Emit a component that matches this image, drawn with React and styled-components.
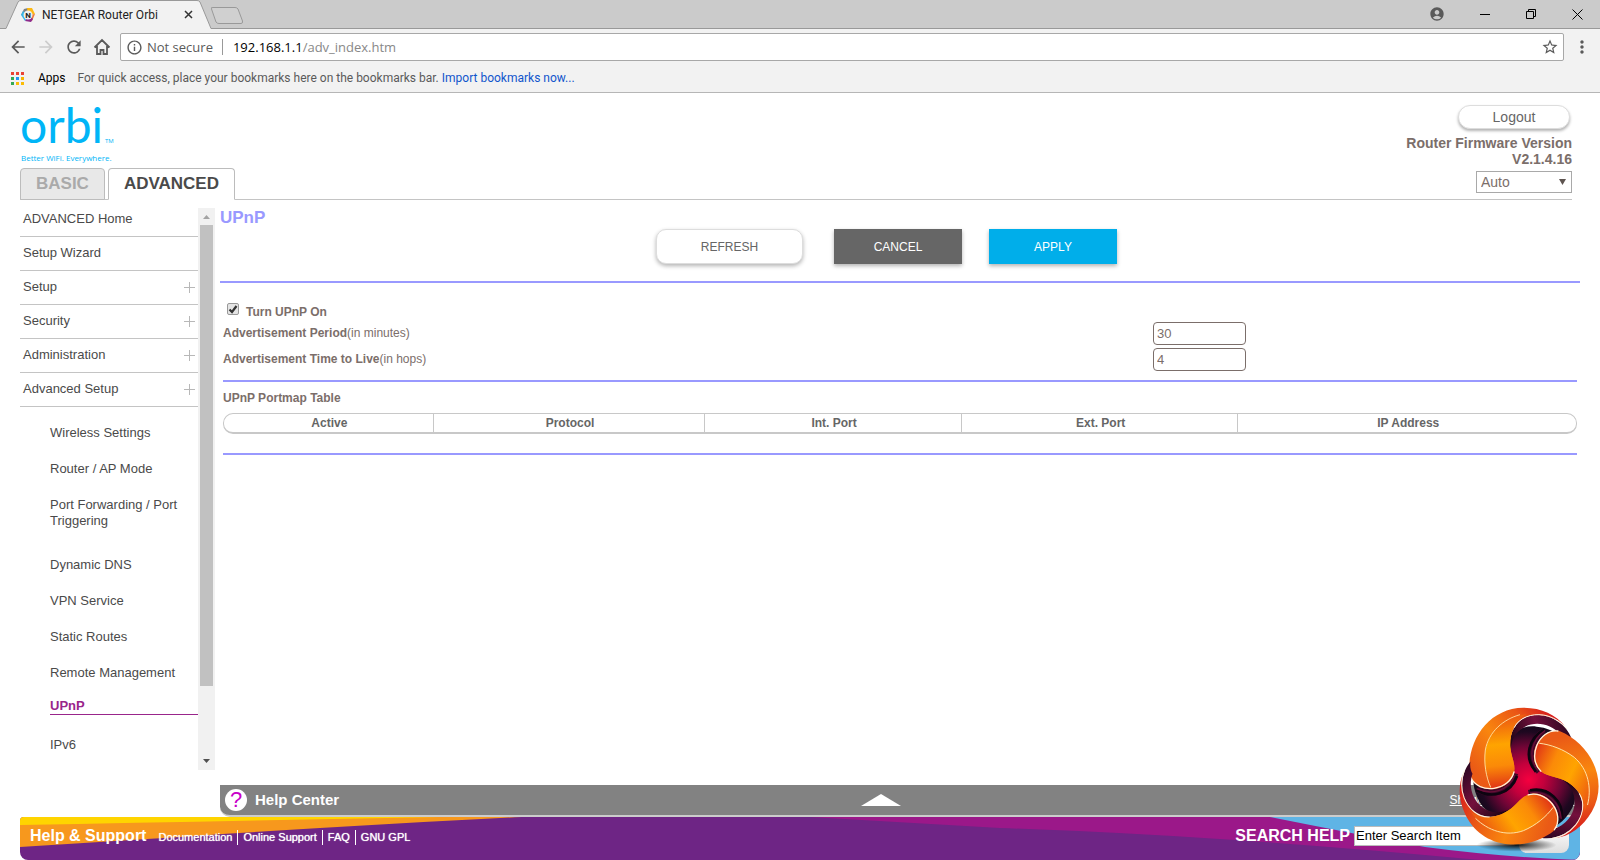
import { useState } from 'react';
import styled, { createGlobalStyle, css } from 'styled-components';
import {
    MdAccountCircle,
    MdArrowBack,
    MdArrowForward,
    MdInfoOutline,
    MdMoreVert,
    MdRefresh,
    MdStarBorder,
} from 'react-icons/md';

const GlobalStyle = createGlobalStyle`
  *, *::before, *::after { box-sizing: border-box; }
  body {
    margin: 0;
    background: #fff;
    color: #444;
    font: 13px/16px Arial, "Liberation Sans", sans-serif;
  }
  button, input, select { font-family: inherit; }
`;

const Window = styled.div`
  display: flex;
  flex-direction: column;
  min-height: 100vh;
`;

/* ---------- browser ---------- */

const BrowserBar = styled.header`
  background: #f2f2f2;
  border-bottom: 1px solid #b6b6b6;
  color: #5a5a5a;
  font-family: "Open Sans", "Noto Sans", sans-serif;
`;

const TabStrip = styled.div`
  display: flex;
  height: 29px;
  background: #cbcbcb;
  border-bottom: 1px solid #999;
`;

const BrowserTab = styled.div`
  position: relative;
  display: flex;
  align-items: center;
  width: 211px;
  height: 29px;
  padding: 0 18px 0 20px;
  gap: 6px;
  color: #222;
  font-family: Roboto, sans-serif;
  font-size: 12px;
`;

const TabShape = styled.svg`
  position: absolute;
  inset: 0;
`;

const TabTitle = styled.span`
  position: relative;
  flex: 1;
  white-space: nowrap;
`;

const Favicon = styled.svg`
  position: relative;
`;

const PlainButton = styled.button`
  position: relative;
  display: flex;
  align-items: center;
  justify-content: center;
  padding: 0;
  border: 0;
  background: none;
  color: ${(p) => p.$color || '#5a5a5a'};
`;

const WindowButtons = styled.div`
  display: flex;
  align-items: center;
  gap: 35px;
  margin-left: auto;
  padding-right: 17px;
`;

const Toolbar = styled.div`
  display: flex;
  align-items: center;
  height: 36px;
  padding: 0 8px;
  gap: 8px;
`;

const Address = styled.div`
  display: flex;
  align-items: center;
  flex: 1;
  height: 28px;
  padding: 0 4px 0 5px;
  border: 1px solid #a8a8a8;
  border-radius: 2px;
  background: #fff;
  font-size: 13px;
`;

const Security = styled.span`
  margin-left: 4px;
  padding-right: 9px;
  border-right: 1px solid #999;
`;

const Url = styled.span`
  flex: 1;
  padding-left: 10px;
  color: #888;

  b { color: #000; font-weight: 400; }
`;

const Bookmarks = styled.div`
  display: flex;
  align-items: center;
  height: 27px;
  padding: 0 0 1px 11px;
  font-family: Roboto, sans-serif;
  font-size: 12px;

  a { margin-left: 3px; color: #1155cc; text-decoration: none; }
`;

const AppsLabel = styled.span`
  margin: 0 12px 0 14px;
  color: #000;
`;

/* ---------- page header ---------- */

const PageHeader = styled.div`
  display: flex;
  justify-content: space-between;
  margin: 0 28px 0 20px;
  height: 107px;
  border-bottom: 1px solid #c4c4c4;
`;

const Brand = styled.div`
  display: flex;
  flex-direction: column;
  justify-content: space-between;
  padding-top: 8px;
`;

const Logo = styled.svg`
  overflow: visible;
`;

const Tabs = styled.nav`
  display: flex;
  gap: 3px;
  margin-bottom: -1px;
`;

const PageTab = styled.a`
  height: 32px;
  padding: 0 15px;
  border: 1px solid #bcbcbc;
  border-radius: 4px 4px 0 0;
  background: #e8e8e8;
  color: #aaa;
  font-size: 17px;
  font-weight: 700;
  line-height: 30px;
  text-decoration: none;

  ${(p) => p.$active && css`
    border-bottom-color: #fff;
    background: #fff;
    color: #4a4a4a;
  `}
`;

const Account = styled.div`
  display: flex;
  flex-direction: column;
  align-items: flex-end;
  padding-top: 12px;
  color: #7b6e6a;
`;

const LogoutButton = styled.button`
  width: 112px;
  height: 24px;
  margin: 0 2px 6px 0;
  border: 1px solid #ddd;
  border-radius: 12px;
  background: #fff;
  box-shadow: 0 2px 3px rgba(0, 0, 0, 0.3);
  color: #666;
  font-size: 14px;
`;

const Firmware = styled.div`
  font-size: 14px;
  font-weight: 700;
  text-align: right;
`;

const Language = styled.div`
  position: relative;
  width: 96px;
  margin-top: 4px;

  svg { position: absolute; top: 8px; right: 6px; pointer-events: none; }
`;

const LanguageSelect = styled.select`
  width: 100%;
  height: 22px;
  padding: 0 4px;
  border: 1px solid #a9a9a9;
  border-radius: 0;
  background: #fff;
  color: #7b6e6a;
  font-size: 14px;
  appearance: none;
`;

/* ---------- side menu ---------- */

const Body = styled.div`
  display: flex;
  flex: 1;
  gap: 5px;
  padding: 0 20px;
`;

const Sidebar = styled.aside`
  display: flex;
  width: 195px;
  margin: 8px 0 47px;
`;

const Menu = styled.nav`
  flex: 1;
`;

const MenuItem = styled.a`
  display: flex;
  align-items: center;
  justify-content: space-between;
  padding: 8px 3px 9px;
  border-bottom: 1px solid #c4c4c4;
  color: #4a4a4a;
  text-decoration: none;

  &:first-child { padding-top: 3px; }
`;

const SubMenu = styled.div`
  padding: 8px 0 0 30px;
`;

const SubItem = styled.a`
  display: block;
  padding: 10px 0;
  color: #4a4a4a;
  text-decoration: none;

  ${(p) => p.$tall && css`
    margin-bottom: 8px;
  `}

  ${(p) => p.$active && css`
    margin-bottom: 12px;
    padding: 7px 0 0;
    border-bottom: 1px solid #99258b;
    color: #99258b;
    font-weight: 700;
  `}
`;

const ScrollTrack = styled.div`
  display: flex;
  flex-direction: column;
  align-items: center;
  width: 17px;
  background: #f1f1f1;
`;

const ScrollArrow = styled.svg`
  flex: none;
  margin: 5px 0;
`;

const ScrollThumb = styled.div`
  flex: none;
  width: 13px;
  height: 82%;
  margin-bottom: auto;
  background: #c1c1c1;
`;

/* ---------- main panel ---------- */

const Main = styled.main`
  display: flex;
  flex: 1;
  flex-direction: column;
  color: #7b6e6a;
  font-size: 12px;
`;

const Title = styled.h1`
  margin: 8px 0 1px;
  color: #9999ff;
  font-size: 17px;
  line-height: 20px;
`;

const Actions = styled.div`
  display: flex;
  justify-content: center;
  gap: 27px;
  padding: 0 27px 17px 0;
  border-bottom: 2px solid #9999ff;
`;

const ActionButton = styled.button`
  width: 128px;
  height: 35px;
  border: 0;
  background: ${(p) => (p.$primary ? '#00aeea' : '#666')};
  box-shadow: 0 2px 4px rgba(0, 0, 0, 0.3);
  color: #fff;
  font-size: 12px;

  ${(p) => p.$outline && css`
    width: 147px;
    margin-right: 4px;
    border: 1px solid #ddd;
    border-radius: 10px;
    background: #fff;
    color: #666;
  `}
`;

const Form = styled.form`
  padding: 16px 3px 0;
`;

const CheckRow = styled.div`
  display: flex;
  gap: 7px;
  padding: 4px 0 1px 4px;
  font-weight: 700;

  label { line-height: 18px; }
`;

const Checkbox = styled.input`
  width: 12px;
  height: 12px;
  margin: 0;
  border: 1px solid #999;
  border-radius: 2px;
  background: linear-gradient(#eee, #ddd);
  appearance: none;

  &:checked {
    background: url("data:image/svg+xml,%3Csvg xmlns='http://www.w3.org/2000/svg' viewBox='0 0 10 10'%3E%3Cpath d='M1.5 5.5 4 8 8.5 2' fill='none' stroke='%23333' stroke-width='2.2'/%3E%3C/svg%3E") #e4e4e4;
  }
`;

const Field = styled.div`
  display: grid;
  grid-template-columns: 930fr 424fr;
  height: 26px;

  label { line-height: 22px; }
`;

const NumberInput = styled.input`
  width: 93px;
  height: 23px;
  padding: 0 3px;
  border: 1px solid #7b6e6a;
  border-radius: 4px;
  color: #7b6e6a;
  font-size: 13px;
`;

const Rule = styled.hr`
  height: 2px;
  margin: ${(p) => p.$gap}px 0 0;
  border: 0;
  background: #9999ff;
`;

const TableTitle = styled.h2`
  margin: 8px 0 7px;
  font-size: 12px;
  line-height: 16px;
`;

const PortTable = styled.table`
  width: 100%;
  border: 1px solid #c8c8c8;
  border-bottom-width: 2px;
  border-radius: 10px;
  border-spacing: 0;
  table-layout: fixed;

  th {
    height: 18px;
    padding: 0 0 0 2px;
    border-left: 1px solid #c8c8c8;
    color: #666;
    line-height: 16px;
  }
  th:first-child { border-left: 0; }
`;

const HelpBar = styled.div`
  display: grid;
  grid-template-columns: 635fr auto 672fr;
  align-items: center;
  height: 32px;
  margin-top: auto;
  padding: 0 5px;
  border-bottom: 2px solid #ccc;
  border-radius: 0 0 0 10px;
  background: #828282;
  color: #fff;

  a { justify-self: end; color: #fff; }
`;

const HelpTitle = styled.strong`
  display: flex;
  align-items: center;
  gap: 8px;
  font-size: 15px;
`;

const HelpMark = styled.span`
  width: 22px;
  height: 22px;
  border-radius: 50%;
  background: #fff;
  color: #c800c8;
  font-size: 22px;
  font-weight: 400;
  line-height: 22px;
  text-align: center;
`;

/* ---------- footer ---------- */

const Footer = styled.footer`
  position: relative;
  display: flex;
  align-items: center;
  height: 43px;
  margin: 0 20px;
  padding: 0 11px 6px 10px;
  overflow: hidden;
  border-radius: 4px 4px 8px 8px;
  background: #6e2585;
  color: #fff;
`;

const FooterArt = styled.svg`
  position: absolute;
  inset: 0;
  width: 100%;
  height: 100%;
`;

const FooterHeading = styled.strong`
  position: relative;
  font-size: 16px;
`;

const FooterLinks = styled.div`
  position: relative;
  display: flex;
  flex: 1;
  padding: 4px 0 0 7px;

  a {
    padding: 0 5px;
    color: #fff;
    font-size: 11px;
    line-height: 15px;
    text-decoration: none;
    text-shadow: 0 0 1px #fff;
  }
  a + a { border-left: 1px solid #fff; }
`;

const Search = styled.form`
  position: relative;
  display: flex;
  align-items: center;
  gap: 4px;
  font-size: 16px;
  font-weight: 700;
`;

const SearchInput = styled.input`
  width: 161px;
  height: 20px;
  padding: 0 1px;
  border: 1px solid #bbb;
  color: #000;
  font-size: 13px;

  &::placeholder { color: #000; opacity: 1; }
`;

const SearchButton = styled.button`
  width: 50px;
  height: 26px;
  margin-top: 8px;
  border: 0;
  border-radius: 8px;
  background: linear-gradient(#fff, #ddd);
`;

/* floats over the corner of the page */
const Watermark = styled.svg`
  position: absolute;
  top: 707px;
  right: 0;
`;

const MENU = [
    { label: 'ADVANCED Home' },
    { label: 'Setup Wizard' },
    { label: 'Setup', expandable: true },
    { label: 'Security', expandable: true },
    { label: 'Administration', expandable: true },
    { label: 'Advanced Setup', expandable: true },
];

const SUBMENU = [
    'Wireless Settings',
    'Router / AP Mode',
    'Port Forwarding / Port Triggering',
    'Dynamic DNS',
    'VPN Service',
    'Static Routes',
    'Remote Management',
    'UPnP',
    'IPv6',
];

const COLUMNS = [
    ['Active', 209],
    ['Protocol', 272],
    ['Int. Port', 257],
    ['Ext. Port', 277],
    ['IP Address', 339],
];

const APP_DOTS = ['#ea4335', '#ea4335', '#ea4335', '#34a853', '#2196f3', '#f4b400', '#34a853', '#fbbc05', '#fbbc05'];

const Plus = () => (
    <svg width="11" height="11" viewBox="0 0 11 11">
        <path d="M5.500 0v11M0 5.500h11" stroke="#b8b8b8" />
    </svg>
);

const HomeIcon = () => (
    <svg width="20" height="20" viewBox="0 0 20 20">
        <path d="M2.500 10.500L10 3l7.500 7.500M5 9v8h3.500v-4h3v4H15V9" fill="none" stroke="#5a5a5a" strokeWidth="1.800" />
    </svg>
);

const NetgearIcon = () => (
    <Favicon width="16" height="16" viewBox="0 0 16 16">
        <path d="M4 2l4-1v7H1z" fill="#7d8083" />
        <path d="M7 1h5l3 6-7 1z" fill="#fdb913" />
        <path d="M15 7l-3 7-4-6z" fill="#ee7a3a" />
        <path d="M13 12l-2 3-6-1 3-6z" fill="#8e2a8b" />
        <path d="M5 14L1 8l2-4 5 4z" fill="#35b5e8" />
        <circle cx="8" cy="8" r="4.500" fill="#eee" />
        <text x="8" y="11" textAnchor="middle" fontSize="8" fontWeight="700" fill="#222">N</text>
    </Favicon>
);

const OrbiLogo = () => (
    <Logo width="96" height="60" viewBox="0 0 96 60" fill="#00b5f7">
        <text x="0" y="42" fontFamily="Lato, sans-serif" fontSize="48">orbi</text>
        <text x="85" y="42" fontFamily="Open Sans, sans-serif" fontSize="6">TM</text>
        <text x="1" y="60" fontFamily="Open Sans, sans-serif" fontSize="8">Better WiFi. Everywhere.</text>
    </Logo>
);

const Swirl = () => (
    <Watermark width="142" height="145" viewBox="234 51 426 435" aria-hidden="true">
        <defs>
            <radialGradient id="core" gradientUnits="userSpaceOnUse" cx="440" cy="270" r="170">
                <stop offset="0" stopColor="#f5003f" />
                <stop offset="0.3" stopColor="#c2003c" />
                <stop offset="0.6" stopColor="#6d0535" />
                <stop offset="0.85" stopColor="#1e0820" />
                <stop offset="1" stopColor="#120718" />
            </radialGradient>
            <linearGradient id="blade" gradientUnits="userSpaceOnUse" x1="290" y1="250" x2="500" y2="60">
                <stop offset="0" stopColor="#ea5a16" />
                <stop offset="0.4" stopColor="#f9860e" />
                <stop offset="0.75" stopColor="#ea5616" />
                <stop offset="1" stopColor="#d81e1c" />
            </linearGradient>
            <linearGradient id="face" gradientUnits="userSpaceOnUse" x1="350" y1="90" x2="370" y2="300">
                <stop offset="0" stopColor="#ee5f10" />
                <stop offset="0.35" stopColor="#ffa400" />
                <stop offset="0.65" stopColor="#fb8a08" />
                <stop offset="1" stopColor="#dd2a18" />
            </linearGradient>
            <linearGradient id="ribbon" gradientUnits="userSpaceOnUse" x1="390" y1="170" x2="570" y2="110">
                <stop offset="0" stopColor="#1a0514" />
                <stop offset="0.5" stopColor="#74103c" />
                <stop offset="1" stopColor="#2a0620" />
            </linearGradient>
            <radialGradient id="shade">
                <stop offset="0" stopColor="#000" stopOpacity="0.9" />
                <stop offset="1" stopColor="#000" stopOpacity="0" />
            </radialGradient>
        </defs>
        <ellipse cx="410" cy="465" rx="120" ry="20" fill="url(#shade)" />
        {[0, 120, 240].map((turn) => (
            <path
                key={turn}
                transform={`rotate(${turn} 443 268)`}
                fill="url(#core)"
                d="M403 245C400 210 380 180 394 145C405 115 440 106 470 110C500 113 520 122 534 134C495 135 462 165 466 208C469 238 495 258 525 275L440 320Z"
            />
        ))}
        {[0, 120, 240].map((turn) => (
            <g key={turn} transform={`rotate(${turn} 443 268)`}>
                <path fill="url(#ribbon)" d="M391 190C380 120 420 74 470 74C520 76 560 105 575 146C563 136 550 133 540 133C515 103 470 92 435 110C405 126 392 150 391 190Z" />
                <path fill="none" stroke="#3c0828" strokeWidth="18" d="M292 298C335 320 388 308 406 250" />
                <path fill="none" stroke="#0d0410" strokeWidth="8" d="M289 300C332 326 392 314 411 258" />
                <path fill="none" stroke="#6a0e38" strokeWidth="4" d="M290 296C332 316 384 305 405 254" />
                <path fill="url(#blade)" d="M270 258C256 160 322 54 430 53C484 53 528 74 554 108C524 78 480 70 448 77C405 88 388 130 391 172C394 205 410 225 400 255C389 285 355 301 325 297C300 294 280 284 270 258Z" />
                <path fill="url(#face)" d="M442 72C400 76 350 100 326 150C306 195 312 250 334 294C360 298 389 285 400 255C410 225 394 205 391 172C388 130 405 88 442 72Z" />
                <path fill="none" stroke="#ffe9b0" strokeWidth="2.500" d="M420 74C370 88 326 125 316 180C311 220 318 260 332 292" />
                <path fill="none" stroke="#fff3dc" strokeWidth="4" strokeLinecap="round" d="M272 262C284 288 312 299 342 295C375 290 396 270 402 246" />
                <path fill="none" stroke="#fff3dc" strokeWidth="3" strokeLinecap="round" d="M403 112C418 82 455 70 490 75C520 80 545 97 560 116" />
            </g>
        ))}
    </Watermark>
);

const App = () => {
    const [enabled, setEnabled] = useState(true);
    const [period, setPeriod] = useState('30');
    const [hops, setHops] = useState('4');

    const handleChange = (func) => (event) => {
        func(event.target.value);
    };

    return (
        <Window>
            <GlobalStyle />
            <BrowserBar>
                <TabStrip>
                    <BrowserTab>
                        <TabShape width="250" height="29" viewBox="0 0 250 29">
                            <path d="M0 28.5H6L18 2Q19 .5 21 .5H197Q199 .5 200 2L211 28.5V29H0Z" fill="#f2f2f2" />
                            <path d="M0 28.5H6L18 2Q19 .5 21 .5H197Q199 .5 200 2L211 28.5" fill="none" stroke="#999" />
                        </TabShape>
                        <NetgearIcon />
                        <TabTitle>NETGEAR Router Orbi</TabTitle>
                        <PlainButton aria-label="Close tab">
                            <svg width="9" height="9"><path d="M1 1l7 7M8 1L1 8" stroke="#333" strokeWidth="1.5" /></svg>
                        </PlainButton>
                    </BrowserTab>
                    <PlainButton aria-label="New tab">
                        <svg width="34" height="28">
                            <path d="M.5 9Q-1 7.500 2 7.500H24Q26 7.500 27 9L31.500 21Q32 23.500 30 23.500H8Q6 23.500 5 22Z" fill="#d0d0d0" stroke="#999" />
                        </svg>
                    </PlainButton>
                    <WindowButtons>
                        <PlainButton aria-label="Profile"><MdAccountCircle size={16} /></PlainButton>
                        <PlainButton aria-label="Minimize">
                            <svg width="11" height="11"><path d="M0 5.500h10" stroke="#000" /></svg>
                        </PlainButton>
                        <PlainButton aria-label="Restore">
                            <svg width="11" height="11"><path d="M.5 2.500h7v7h-7zM2.500 2.500v-2h7v7h-2" fill="none" stroke="#000" /></svg>
                        </PlainButton>
                        <PlainButton aria-label="Close">
                            <svg width="11" height="11"><path d="M.5.5l10 10M10.500.5l-10 10" stroke="#000" /></svg>
                        </PlainButton>
                    </WindowButtons>
                </TabStrip>
                <Toolbar>
                    <PlainButton aria-label="Back"><MdArrowBack size={20} /></PlainButton>
                    <PlainButton aria-label="Forward" $color="#ccc"><MdArrowForward size={20} /></PlainButton>
                    <PlainButton aria-label="Reload"><MdRefresh size={20} /></PlainButton>
                    <PlainButton aria-label="Home"><HomeIcon /></PlainButton>
                    <Address>
                        <MdInfoOutline size={17} />
                        <Security>Not secure</Security>
                        <Url><b>192.168.1.1</b>/adv_index.htm</Url>
                        <MdStarBorder size={18} />
                    </Address>
                    <PlainButton aria-label="Menu"><MdMoreVert size={20} /></PlainButton>
                </Toolbar>
                <Bookmarks>
                    <svg width="13" height="13">
                        {APP_DOTS.map((fill, i) => (
                            <rect key={i} x={(i % 3) * 5} y={Math.floor(i / 3) * 5} width="3" height="3" fill={fill} />
                        ))}
                    </svg>
                    <AppsLabel>Apps</AppsLabel>
                    For quick access, place your bookmarks here on the bookmarks bar.
                    <a href="#import">Import bookmarks now...</a>
                </Bookmarks>
            </BrowserBar>

            <PageHeader>
                <Brand>
                    <OrbiLogo />
                    <Tabs>
                        <PageTab href="#basic">BASIC</PageTab>
                        <PageTab href="#advanced" $active>ADVANCED</PageTab>
                    </Tabs>
                </Brand>
                <Account>
                    <LogoutButton>Logout</LogoutButton>
                    <Firmware>Router Firmware Version<br />V2.1.4.16</Firmware>
                    <Language>
                        <LanguageSelect aria-label="Language" defaultValue="Auto">
                            <option>Auto</option>
                        </LanguageSelect>
                        <svg width="7" height="6"><path d="M0 0h7L3.500 6z" fill="#5e5450" /></svg>
                    </Language>
                </Account>
            </PageHeader>

            <Body>
                <Sidebar>
                    <Menu>
                        {MENU.map(({ label, expandable }) => (
                            <MenuItem key={label} href="#menu">
                                {label}
                                {expandable && <Plus />}
                            </MenuItem>
                        ))}
                        <SubMenu>
                            {SUBMENU.map((label) => (
                                <SubItem key={label} href="#page" $active={label === 'UPnP'} $tall={label.length > 20}>
                                    {label}
                                </SubItem>
                            ))}
                        </SubMenu>
                    </Menu>
                    <ScrollTrack>
                        <ScrollArrow width="7" height="7"><path d="M0 6l3.500-4L7 6z" fill="#a3a3a3" /></ScrollArrow>
                        <ScrollThumb />
                        <ScrollArrow width="7" height="7"><path d="M0 1l3.500 4L7 1z" fill="#505050" /></ScrollArrow>
                    </ScrollTrack>
                </Sidebar>

                <Main>
                    <Title>UPnP</Title>
                    <Actions>
                        <ActionButton $outline>REFRESH</ActionButton>
                        <ActionButton>CANCEL</ActionButton>
                        <ActionButton $primary>APPLY</ActionButton>
                    </Actions>
                    <Form>
                        <CheckRow>
                            <Checkbox
                                id="upnp"
                                type="checkbox"
                                checked={enabled}
                                onChange={(e) => setEnabled(e.target.checked)}
                            />
                            <label htmlFor="upnp">Turn UPnP On</label>
                        </CheckRow>
                        <Field>
                            <label htmlFor="period"><b>Advertisement Period</b>(in minutes)</label>
                            <NumberInput id="period" value={period} onChange={handleChange(setPeriod)} />
                        </Field>
                        <Field>
                            <label htmlFor="hops"><b>Advertisement Time to Live</b>(in hops)</label>
                            <NumberInput id="hops" value={hops} onChange={handleChange(setHops)} />
                        </Field>
                        <Rule $gap={6} />
                        <TableTitle>UPnP Portmap Table</TableTitle>
                        <PortTable>
                            <colgroup>
                                {COLUMNS.map(([name, width]) => (
                                    <col key={name} style={{ width: `${(width / 1354) * 100}%` }} />
                                ))}
                            </colgroup>
                            <thead>
                                <tr>
                                    {COLUMNS.map(([name]) => <th key={name}>{name}</th>)}
                                </tr>
                            </thead>
                        </PortTable>
                        <Rule $gap={19} />
                    </Form>
                    <HelpBar>
                        <HelpTitle><HelpMark>?</HelpMark>Help Center</HelpTitle>
                        <svg width="40" height="12"><path d="M0 12L20 0l20 12z" fill="#fff" /></svg>
                        <a href="#help">Show/Hide Help Center</a>
                    </HelpBar>
                </Main>
            </Body>

            <Footer>
                <FooterArt viewBox="0 0 1560 43" preserveAspectRatio="none">
                    <path d="M0 0H502Q400 5 300 11T127 22L0 30Z" fill="#f7981d" />
                    <path d="M0 0H420Q200 4 0 8Z" fill="#ffd400" />
                    <path d="M790 0H1560V43H1460Q1332 31 1215 23T980 11Z" fill="#9b1889" />
                    <path d="M1250 0H1560V43Q1480 40 1405 30Q1330 16 1250 0Z" fill="#5fb4e5" />
                </FooterArt>
                <FooterHeading>Help &amp; Support</FooterHeading>
                <FooterLinks>
                    <a href="#docs">Documentation</a>
                    <a href="#support">Online Support</a>
                    <a href="#faq">FAQ</a>
                    <a href="#gpl">GNU GPL</a>
                </FooterLinks>
                <Search>
                    <label htmlFor="search">SEARCH HELP</label>
                    <SearchInput id="search" placeholder="Enter Search Item" />
                    <SearchButton type="button" aria-label="Search" />
                </Search>
            </Footer>
            <Swirl />
        </Window>
    );
};

export default App;
